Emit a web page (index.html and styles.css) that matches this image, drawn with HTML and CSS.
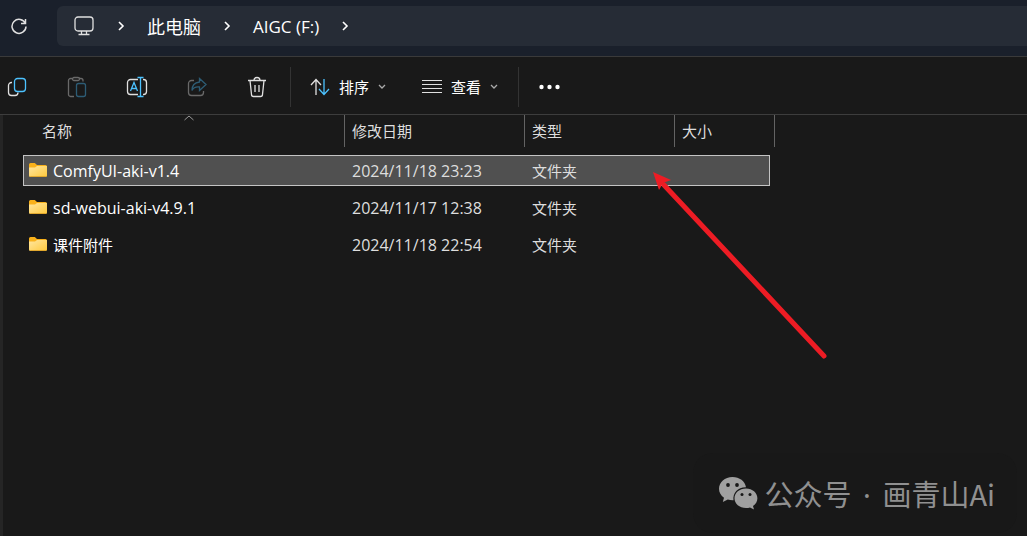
FILE: index.html
```html
<!DOCTYPE html>
<html lang="zh-CN">
<head>
	<meta charset="UTF-8">
	<title>AIGC (F:)</title>
	<link rel="stylesheet" href="styles.css">
</head>
<body>
	<!-- 地址栏 -->
	<header class="address">
		<button class="refresh" type="button" aria-label="刷新">
			<svg width="18" height="18" viewBox="0 0 18 18"><path d="M15.4 6.5A7 7 0 1 0 16 9.5M15.5 2v4.5H11"/></svg>
		</button>
		<nav class="crumbs">
			<svg class="computer" width="21" height="20" viewBox="0 0 21 20"><rect x="1" y="1" width="18" height="14" rx="3"/><path d="M7.5 15v3M12.500 15v3M4.500 18.500h11"/></svg>
			<svg class="arrow" width="8" height="12" viewBox="0 0 8 12"><path d="M2 2l4 4-4 4"/></svg>
			<a href="#">此电脑</a>
			<svg class="arrow" width="8" height="12" viewBox="0 0 8 12"><path d="M2 2l4 4-4 4"/></svg>
			<a class="drive" href="#">AIGC (F:)</a>
			<svg class="arrow" width="8" height="12" viewBox="0 0 8 12"><path d="M2 2l4 4-4 4"/></svg>
		</nav>
	</header>

	<!-- 工具栏 -->
	<div class="toolbar">
		<div class="tools">
			<button type="button" aria-label="复制">
				<svg width="20" height="20" viewBox="0 0 20 20"><path d="M5 5.500H4.500a3 3 0 0 0-3 3V15.500a3 3 0 0 0 3 3H8a3 3 0 0 0 3-3"/><rect class="blue" x="7.500" y="1.500" width="11" height="13" rx="3"/></svg>
			</button>
			<button type="button" aria-label="粘贴" disabled>
				<svg width="20" height="22" viewBox="0 0 20 22"><path d="M7 20.500H3.500a2 2 0 0 1-2-2v-14a2 2 0 0 1 2-2H5M12 2.500h2a2 2 0 0 1 2 2v1"/><rect x="5.500" y="1.500" width="7" height="3" rx="1.500"/><rect class="blue" x="9.500" y="7.500" width="9" height="13" rx="2"/></svg>
			</button>
			<button type="button" aria-label="重命名">
				<svg width="22" height="22" viewBox="0 0 22 22"><path d="M12 3.500H4.500a3 3 0 0 0-3 3v9a3 3 0 0 0 3 3H12M17 3.500h.5a3 3 0 0 1 3 3v9a3 3 0 0 1-3 3H17"/><path class="blue" d="M4.500 15L8 6.500 11.500 15M6 12.500h4M14.500 1.500v19M11.500 1.500h6M11.500 20.500h6"/></svg>
			</button>
			<button type="button" aria-label="共享" disabled>
				<svg width="20" height="20" viewBox="0 0 20 20"><path d="M7 3.500H4.500a3 3 0 0 0-3 3v9a3 3 0 0 0 3 3h9a3 3 0 0 0 3-3V14"/><path class="blue" d="M12.500 1.500l6.500 6-6.500 6V10C9 9.500 6.500 10.500 5 13.500 5 8.500 8 5.500 12.500 5z"/></svg>
			</button>
			<button type="button" aria-label="删除">
				<svg width="20" height="22" viewBox="0 0 20 22"><path d="M1 4.500h18M7 4.500a3 3 0 0 1 6 0M3 4.500l1.500 14a2 2 0 0 0 2 2h7a2 2 0 0 0 2-2L17 4.500M8 9v7M12 9v7"/></svg>
			</button>
		</div>
		<div class="menus">
			<button type="button">
				<svg width="20" height="18" viewBox="0 0 20 18"><path d="M6 17V2M1 7l5-5.500L11 7"/><path class="blue" d="M14 1v15M9 11l5 5.500 5-5.500"/></svg>
				<span>排序</span>
				<svg class="down" width="8" height="6" viewBox="0 0 8 6"><path d="M1 1l3 3 3-3"/></svg>
			</button>
			<button type="button">
				<svg class="lines" width="20" height="14" viewBox="0 0 20 14"><path d="M0 .5h20M0 4.500h20M0 8.500h20M0 12.500h20"/></svg>
				<span>查看</span>
				<svg class="down" width="8" height="6" viewBox="0 0 8 6"><path d="M1 1l3 3 3-3"/></svg>
			</button>
		</div>
		<button class="more" type="button" aria-label="更多">
			<svg width="21" height="6" viewBox="0 0 21 6"><circle cx="2.500" cy="3" r="2.200"/><circle cx="10.500" cy="3" r="2.200"/><circle cx="18.500" cy="3" r="2.200"/></svg>
		</button>
	</div>

	<!-- 文件列表 -->
	<main class="content">
		<table class="files">
			<colgroup>
				<col class="col-name">
				<col class="col-date">
				<col class="col-type">
				<col class="col-size">
				<col class="col-end">
			</colgroup>
			<thead>
				<tr>
					<th class="name"><div>名称<svg class="sort" width="10" height="6" viewBox="0 0 10 6"><path d="M.5 5L5 1l4.500 4"/></svg></div></th>
					<th><div>修改日期</div></th>
					<th><div>类型</div></th>
					<th colspan="2"><div>大小</div></th>
				</tr>
			</thead>
			<tbody>
				<tr class="selected">
					<td class="name"><div><svg class="folder" width="18" height="15" viewBox="0 0 18 15"><use href="#folder"/></svg><span class="latin">ComfyUI-aki-v1.4</span></div></td>
					<td class="latin">2024/11/18 23:23</td>
					<td>文件夹</td>
					<td></td>
				</tr>
				<tr>
					<td class="name"><div><svg class="folder" width="18" height="15" viewBox="0 0 18 15"><use href="#folder"/></svg><span class="latin">sd-webui-aki-v4.9.1</span></div></td>
					<td class="latin">2024/11/17 12:38</td>
					<td>文件夹</td>
					<td></td>
				</tr>
				<tr>
					<td class="name"><div><svg class="folder" width="18" height="15" viewBox="0 0 18 15"><use href="#folder"/></svg><span>课件附件</span></div></td>
					<td class="latin">2024/11/18 22:54</td>
					<td>文件夹</td>
					<td></td>
				</tr>
			</tbody>
		</table>
	</main>

	<!-- 红色箭头 -->
	<svg class="pointer" width="180" height="190" viewBox="0 0 180 190"><path class="shaft" d="M12 13l160 171"/><path class="head" d="M1 0l18 8-8 3-4 7z"/></svg>

	<!-- 公众号 -->
	<div class="watermark">
		<svg width="40" height="34" viewBox="0 0 40 34">
			<path d="M14.500 1C6.800 1 1 6.200 1 12.800c0 3.700 1.900 6.900 5 9L4.800 26l5-2.500c2 .6 3.500.9 5.700.8C14.500 17 20 11 28 11.200 27 5.200 21.500 1 14.500 1z"/>
			<path d="M28 12.500c-6.600 0-11.500 4.300-11.500 9.700S21.400 32 28 32c1.500 0 2.800-.2 4-.6l4 2-1-3.300c2.700-1.800 4.400-4.600 4.400-7.900 0-5.400-5-9.700-11.400-9.700z"/>
			<g class="eyes"><circle cx="10" cy="9" r="1.900"/><circle cx="19" cy="9" r="1.900"/><circle cx="24" cy="18.500" r="1.500"/><circle cx="32" cy="18.500" r="1.500"/></g>
		</svg>
		<span>公众号 <span class="dot">·</span> 画青山Ai</span>
	</div>

	<svg class="defs" width="0" height="0">
		<defs>
			<linearGradient id="yellow" x1="0" y1="0" x2="1" y2="1">
				<stop offset="0" stop-color="#ffe6a0"/>
				<stop offset="1" stop-color="#ffc93c"/>
			</linearGradient>
			<g id="folder">
				<path fill="#f9b11b" d="M0 1.500A1.500 1.500 0 0 1 1.500 0h4.300L8 2h8.500A1.500 1.500 0 0 1 18 3.500V10H0z"/>
				<path fill="url(#yellow)" d="M0 4.500h6L8 3h10v9.500a1.500 1.500 0 0 1-1.500 1.500h-15A1.500 1.500 0 0 1 0 12.500z"/>
				<path fill="#d79a20" d="M.5 13.200h17l-1 .8h-15z"/>
			</g>
		</defs>
	</svg>
</body>
</html>
```
FILE: styles.css
```css
* {
	box-sizing: border-box;
}
body {
	margin: 0;
	min-height: 100vh;
	display: flex;
	flex-direction: column;
	position: relative;
	background-color: #191919;
	color: #fff;
	font-family: "Open Sans", "Noto Sans CJK SC", sans-serif;
	font-size: 15px;
}
button {
	padding: 0;
	border: none;
	background: none;
	color: inherit;
	font: inherit;
}
svg {
	display: block;
	flex: none;
	fill: none;
	stroke: #e0e0e0;
	stroke-width: 1.3;
}

/*地址栏*/
.address {
	display: flex;
	height: 57px;
	padding-top: 6px;
	background-color: #1a202b;
	border-bottom: 1px solid #3a3a3a;
}
.refresh {
	width: 57px;
	height: 40px;
	padding-left: 10px;
}
.refresh svg {
	stroke-width: 1.5;
}
.crumbs {
	flex: 1;
	display: flex;
	align-items: center;
	gap: 22px;
	height: 40px;
	padding-left: 17px;
	border-radius: 6px 0 0 6px;
	background-color: #262c36;
	font-size: 18px;
}
.crumbs a {
	color: #fff;
	text-decoration: none;
}
.crumbs .drive {
	font-size: 17px;
}
.arrow {
	stroke: #fff;
	stroke-width: 1.6;
}

/*工具栏*/
.toolbar {
	display: flex;
	align-items: center;
	height: 58px;
	padding-top: 2px;
	border-bottom: 1px solid #3d3d3d;
}
.tools {
	display: flex;
	gap: 26px;
	padding-right: 16px;
}
.tools button {
	display: flex;
	align-items: center;
	justify-content: center;
	width: 34px;
	height: 40px;
}
.tools button:disabled {
	opacity: 0.4;
}
.toolbar .blue {
	stroke: #4cc2ff;
}
.menus {
	display: flex;
	align-items: center;
	gap: 36px;
	height: 40px;
	padding: 0 20px 0 19px;
	border: solid #333;
	border-width: 0 1px;
}
.menus button {
	display: flex;
	align-items: center;
	gap: 9px;
}
.menus .down {
	stroke: #aaa;
}
.menus .lines {
	stroke-width: 1;
}
.more {
	padding-left: 20px;
}
.more svg {
	fill: #fff;
	stroke: none;
}

/*文件列表*/
.content {
	flex: 1;
	padding-left: 20px;
	border-left: 3px solid #252525;
}
.files {
	width: 752px;
	margin-top: -6px;
	table-layout: fixed;
	border-collapse: separate;
	border-spacing: 0 6px; /*行与行的间隔*/
	line-height: 27px;
}
.col-name {
	width: 322px;
}
.col-date {
	width: 180px;
}
.col-type {
	width: 150px;
}
.col-size {
	width: 95px;
}
.col-end {
	width: 5px;
}
.files th {
	height: 34px;
	padding: 0;
	vertical-align: top;
	text-align: left;
	font-weight: normal;
	color: #dedede;
}
.files th div {
	position: relative;
	height: 32px;
	padding-left: 7px;
	line-height: 32px;
	border-right: 1px solid #636363;
}
.files .name div {
	padding-left: 19px;
}
/*排序方向的小箭头，在列的上沿居中*/
.sort {
	position: absolute;
	top: 0;
	left: 50%;
	stroke: #999;
	stroke-width: 1;
}
.files td {
	height: 31px;
	padding: 2px 7px 0;
	border: solid transparent;
	border-width: 1px 0;
	color: #dedede;
}
.files td.name {
	padding: 2px 0 0;
	border-left-width: 1px;
	color: #fff;
}
.files td.name div {
	display: flex;
	align-items: center;
	gap: 6px;
	padding-left: 5px;
}
.files td:last-child {
	border-right-width: 1px;
}
.files .selected td {
	background-color: #505050;
	border-color: #c4c4c4;
}
.files .latin {
	font-size: 16px;
}
.folder {
	margin-bottom: 2px;
	stroke: none;
}

.pointer {
	position: absolute;
	top: 172px;
	left: 652px;
}
.pointer .shaft {
	stroke: #ed1c24;
	stroke-width: 5;
	stroke-linecap: round;
}
.pointer .head {
	fill: #ed1c24;
	stroke: none;
}

.watermark {
	position: absolute;
	right: 10px;
	bottom: 3px;
	display: flex;
	align-items: center;
	gap: 7px;
	height: 80px;
	padding: 0 22px 0 25px;
	border-radius: 20px;
	background-color: #181818;
	color: #909090;
	font-family: "Noto Sans CJK SC", sans-serif;
	font-size: 29px;
}
.watermark svg {
	fill: #a0a0a0;
	stroke: none;
}
.watermark .eyes {
	fill: #181818;
}
.watermark .dot {
	margin: 0 5px;
	font-family: "Noto Sans", sans-serif;
}
.defs {
	position: absolute;
}
```
